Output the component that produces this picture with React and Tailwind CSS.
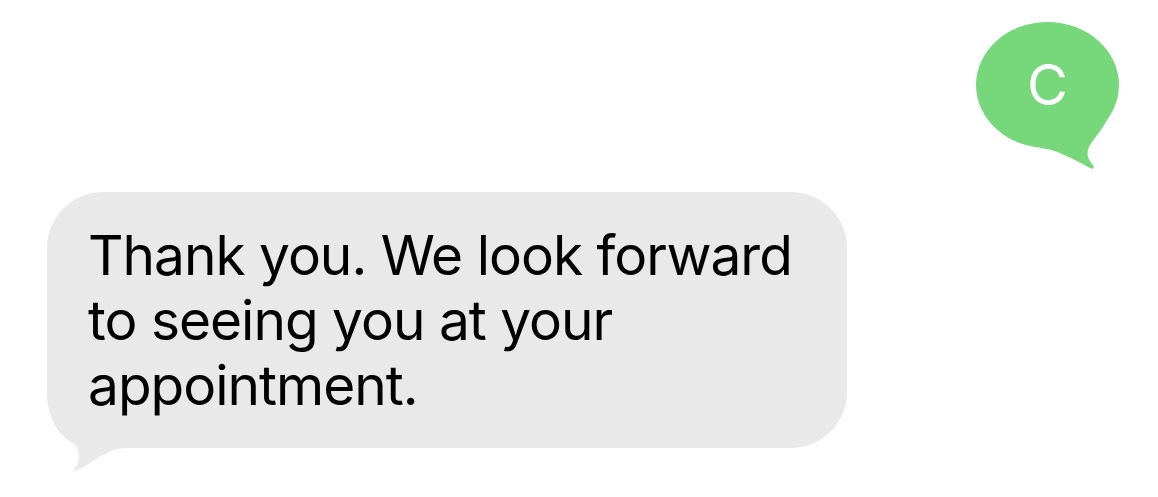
export default function App() {
  return (
    <div className="w-[1158px] h-[497px] bg-white overflow-hidden flex flex-col" style={{ fontFamily: 'Inter, "Noto Sans", sans-serif' }}>
      {/* outgoing bubble */}
      <div className="flex justify-end pr-[39px] pt-[22px]">
        <div className="relative w-[143px] h-[126px] rounded-[50%] bg-[#77d87b] flex items-center justify-center">
          <span className="text-white text-[56px] leading-none font-normal">C</span>
          <svg className="absolute left-[64px] top-[88px]" width="80" height="62" viewBox="0 0 80 62">
            <path d="M0 38 C14 39 28 46 50 58 C54 60 55 57 52 54 C46 47 46 40 52 32 C58 24 64 16 67 10 L30 0 L0 30 Z" fill="#77d87b" />
          </svg>
        </div>
      </div>

      {/* incoming bubble */}
      <div className="pl-[47px] mt-[44px]">
        <div className="relative w-[800px] h-[256px] rounded-[56px] bg-[#e9e9e9] pl-[41px] pt-[31px]">
          <p className="relative z-10 text-black text-[55px] leading-[65px] tracking-[-1px]">
            Thank you. We look forward
            <br />
            to seeing you at your
            <br />
            appointment.
          </p>
          <svg className="absolute left-0 top-[200px]" width="80" height="85" viewBox="0 0 80 85">
            <path d="M0 0 C0 25 10 42 26 51 C34 58 34 70 26 79 C40 76 52 62 70 57 L80 56 L80 0 Z" fill="#e9e9e9" />
          </svg>
        </div>
      </div>
    </div>
  );
}
